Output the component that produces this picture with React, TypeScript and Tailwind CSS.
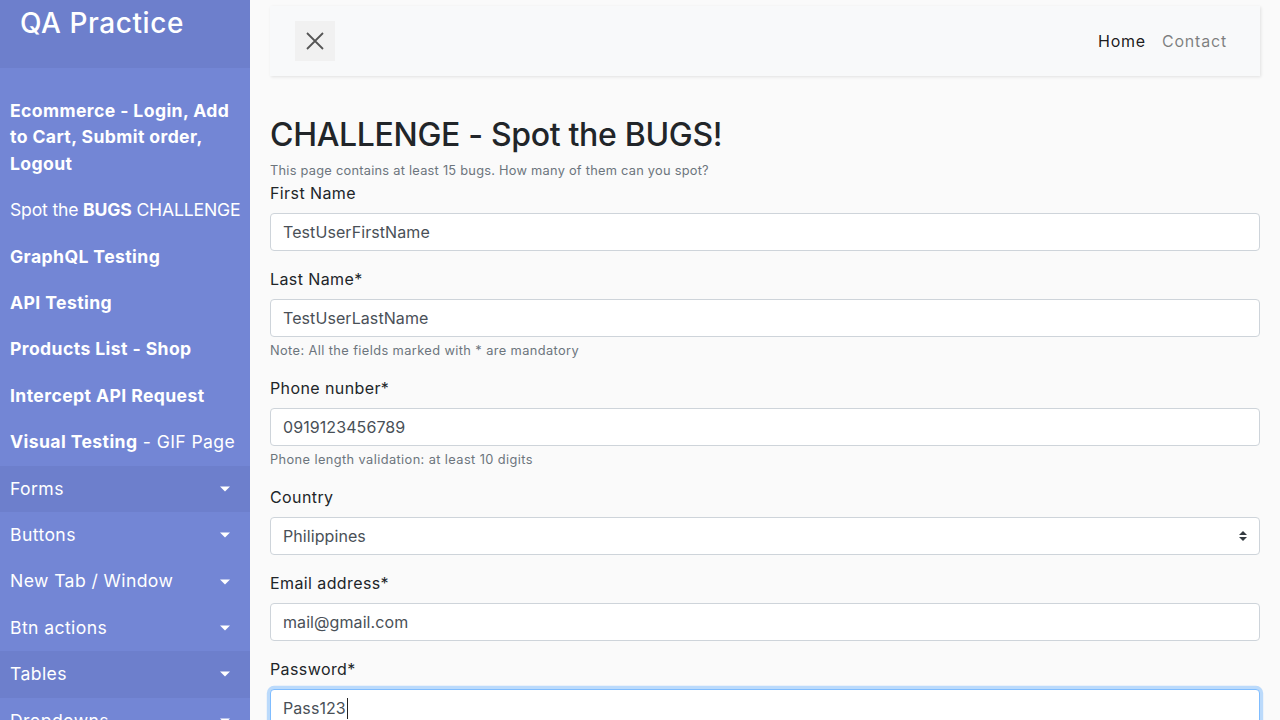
import React from "react";

const sideItems: { content: React.ReactNode; caret?: boolean; active?: boolean }[] = [
  {
    content: (
      <span className="font-bold">
        Ecommerce - Login, Add
        <br />
        to Cart, Submit order,
        <br />
        Logout
      </span>
    ),
  },
  {
    content: (
      <span className="whitespace-nowrap tracking-[-0.01em]">
        Spot the <span className="font-bold">BUGS</span> CHALLENGE
      </span>
    ),
  },
  { content: <span className="font-bold">GraphQL Testing</span> },
  { content: <span className="font-bold">API Testing</span> },
  { content: <span className="font-bold">Products List - Shop</span> },
  { content: <span className="font-bold">Intercept API Request</span> },
  {
    content: (
      <span className="whitespace-nowrap">
        <span className="font-bold">Visual Testing</span> - GIF Page
      </span>
    ),
  },
  { content: <span>Forms</span>, caret: true, active: true },
  { content: <span>Buttons</span>, caret: true },
  { content: <span>New Tab / Window</span>, caret: true },
  { content: <span>Btn actions</span>, caret: true },
  { content: <span>Tables</span>, caret: true, active: true },
  { content: <span>Dropdowns</span>, caret: true },
  { content: <span>Alerts</span>, caret: true },
];

function Field({
  label,
  value,
  note,
  focused,
  select,
}: {
  label: string;
  value: string;
  note?: string;
  focused?: boolean;
  select?: boolean;
}) {
  return (
    <div className="mb-4">
      <label className="block text-[16px] leading-6 mb-2 text-[#212529]">{label}</label>
      <div
        className={
          "relative flex items-center h-[38px] px-3 bg-white rounded-[4px] border text-[16px] tracking-[0.005em] text-[#495057] " +
          (focused
            ? "border-[#80bdff] shadow-[0_0_0_3.2px_rgba(0,123,255,0.25)]"
            : "border-[#ced4da]")
        }
      >
        <span>{value}</span>
        {focused && <span className="inline-block w-px h-[21px] bg-[#222] ml-[1px]" />}
        {select && (
          <svg
            className="absolute right-[12px] top-1/2 -translate-y-1/2"
            width="8"
            height="10"
            viewBox="0 0 4 5"
          >
            <path fill="#343a40" d="M2 0L0 2h4zm0 5L0 3h4z" />
          </svg>
        )}
      </div>
      {note && <div className="mt-1 text-[12.8px] leading-[19.2px] text-[#6c757d]">{note}</div>}
    </div>
  );
}

export default function App() {
  return (
    <div className="flex h-[720px] w-full overflow-hidden bg-[#fafafa] font-['Inter',sans-serif] tracking-[0.025em]">
      <nav className="w-[250px] shrink-0 bg-[#7386D5] text-white">
        <div className="h-[68px] bg-[#6d7fcc] px-5 pt-[7px]">
          <h3 className="text-[28px] leading-[33.6px] font-medium tracking-[0.02em]">QA Practice</h3>
        </div>
        <ul className="pt-[20px]">
          {sideItems.map((it, i) => (
            <li
              key={i}
              className={
                "relative p-[10px] text-[17.6px] leading-[26.4px] " + (it.active ? "bg-[#6d7fcc]" : "")
              }
            >
              {it.content}
              {it.caret && (
                <span className="absolute right-5 top-1/2 -translate-y-1/2 w-0 h-0 border-t-[5px] border-t-white border-x-[5px] border-x-transparent" />
              )}
            </li>
          ))}
        </ul>
      </nav>

      <main className="flex-1 px-5 pt-[6px]">
        <div className="h-[70px] bg-[#f8f9fa] shadow-[1px_1px_3px_rgba(0,0,0,0.1)] px-[25px] flex items-center justify-between">
          <button className="w-10 h-10 bg-[#f1f1f1] flex items-center justify-center">
            <svg width="18" height="18" viewBox="0 0 18 18" fill="none" stroke="#555" strokeWidth="1.8">
              <path d="M1 1L17 17M17 1L1 17" />
            </svg>
          </button>
          <ul className="flex text-[16px] leading-6 tracking-[0.05em]">
            <li className="px-2 text-[rgba(0,0,0,0.9)]">Home</li>
            <li className="px-2 text-[rgba(0,0,0,0.5)]">Contact</li>
          </ul>
        </div>

        <h2 className="mt-10 mb-[7px] text-[32px] leading-[38.4px] font-medium tracking-[-0.01em] text-[#212529]">
          CHALLENGE - Spot the BUGS!
        </h2>
        <div className="text-[12.8px] leading-[19.2px] tracking-[0.02em] text-[#6c757d]">
          This page contains at least 15 bugs. How many of them can you spot?
        </div>

        <Field label="First Name" value="TestUserFirstName" />
        <Field label="Last Name*" value="TestUserLastName" note="Note: All the fields marked with * are mandatory" />
        <Field label="Phone nunber*" value="0919123456789" note="Phone length validation: at least 10 digits" />
        <Field label="Country" value="Philippines" select />
        <Field label="Email address*" value="mail@gmail.com" />
        <Field label="Password*" value="Pass123" focused />
      </main>
    </div>
  );
}
